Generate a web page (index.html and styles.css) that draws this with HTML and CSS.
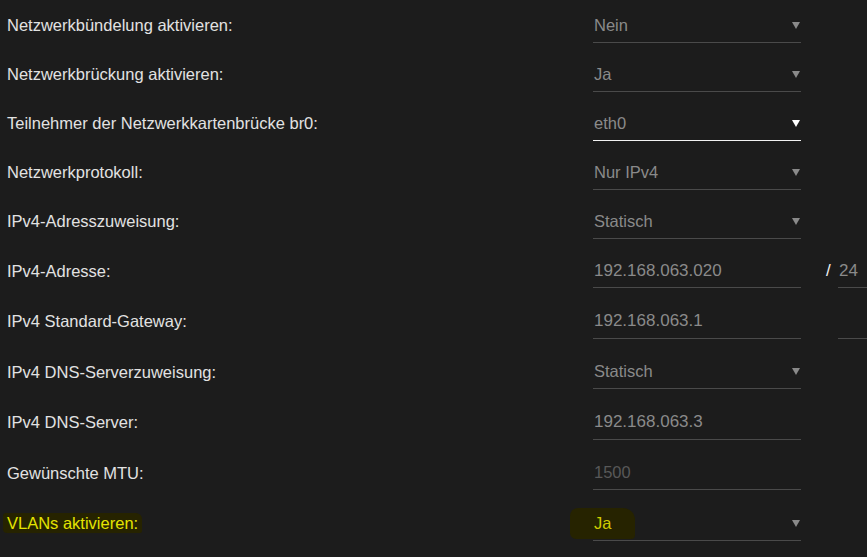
FILE: index.html
```html
<!doctype html>
<html lang="de">
 <head>
  <meta charset="UTF-8">
  <meta name="viewport" content="width=device-width, initial-scale=1.0">
  <title>Netzwerk</title>
  <link rel="stylesheet" href="styles.css">
 </head>
 <body>
  <div class="form">
   <div class="row">
    <label>Netzwerkbündelung aktivieren:</label>
    <div class="field select"><span>Nein</span><i class="arrow"></i></div>
   </div>
   <div class="row">
    <label>Netzwerkbrückung aktivieren:</label>
    <div class="field select"><span>Ja</span><i class="arrow"></i></div>
   </div>
   <div class="row">
    <label>Teilnehmer der Netzwerkkartenbrücke br0:</label>
    <div class="field select focus"><span>eth0</span><i class="arrow"></i></div>
   </div>
   <div class="row">
    <label>Netzwerkprotokoll:</label>
    <div class="field select"><span>Nur IPv4</span><i class="arrow"></i></div>
   </div>
   <div class="row">
    <label>IPv4-Adresszuweisung:</label>
    <div class="field select"><span>Statisch</span><i class="arrow"></i></div>
   </div>
   <div class="row tall">
    <label>IPv4-Adresse:</label>
    <div class="field ip"><span>192.168.063.020</span></div>
    <div class="suffix"><span class="slash">/</span><div class="field ip small"><span>24</span></div></div>
   </div>
   <div class="row tall">
    <label>IPv4 Standard-Gateway:</label>
    <div class="field ip"><span>192.168.063.1</span></div>
    <div class="suffix"><span class="slash"></span><div class="field ip small"><span></span></div></div>
   </div>
   <div class="row tall">
    <label>IPv4 DNS-Serverzuweisung:</label>
    <div class="field select"><span>Statisch</span><i class="arrow"></i></div>
   </div>
   <div class="row tall">
    <label>IPv4 DNS-Server:</label>
    <div class="field ip"><span>192.168.063.3</span></div>
   </div>
   <div class="row tall">
    <label>Gewünschte MTU:</label>
    <div class="field disabled"><span>1500</span></div>
   </div>
   <div class="row tall marked">
    <label><span class="mark">VLANs aktivieren:</span></label>
    <div class="field select"><span class="mark">Ja</span><i class="arrow"></i></div>
   </div>
  </div>
 </body>
</html>
```

FILE: styles.css
```css
body {
    margin: 0;
    padding-top: 1px;
    background-color: #1c1c1c;
    font-family: "Liberation Sans", Arial, sans-serif;
    font-size: 16.5px;
    color: #e2e2e2;
    overflow: hidden;
}
.form {
    padding-left: 7px;
}
.row {
    display: grid;
    grid-template-columns: 586px 208px 74px;
    align-items: center;
    height: 49px;
}
.row.tall {
    height: 50.5px;
}
label {
    white-space: nowrap;
}
.field {
    height: 33px;
    border-bottom: 1px solid #4a4a4a;
    display: flex;
    align-items: center;
    justify-content: space-between;
    padding-left: 1px;
    color: #8a8a8a;
}
.field.focus {
    border-bottom-color: #f2f2f2;
}
.field.ip {
    font-size: 17px;
}
.field.disabled {
    color: #585858;
}
.arrow {
    width: 0;
    height: 0;
    margin-right: 1px;
    border-left: 4px solid transparent;
    border-right: 4px solid transparent;
    border-top: 7px solid #8a8a8a;
}
.focus .arrow {
    border-top-color: #ffffff;
}
.suffix {
    display: flex;
    align-items: center;
    padding-left: 25px;
}
.slash {
    width: 12px;
    color: #f0f0f0;
    font-size: 17px;
}
.field.small {
    flex: 1;
}
.marked label {
    color: #e4e400;
}
.mark {
    background-color: #262300;
    padding: 1px 4px;
    margin-left: -4px;
    border-radius: 3px 6px 2px 4px;
}
.field .mark {
    color: #cfcb00;
    padding: 6px 24px 6px 24px;
    margin-left: -24px;
    border-radius: 8px 12px 4px 6px;
}
```
